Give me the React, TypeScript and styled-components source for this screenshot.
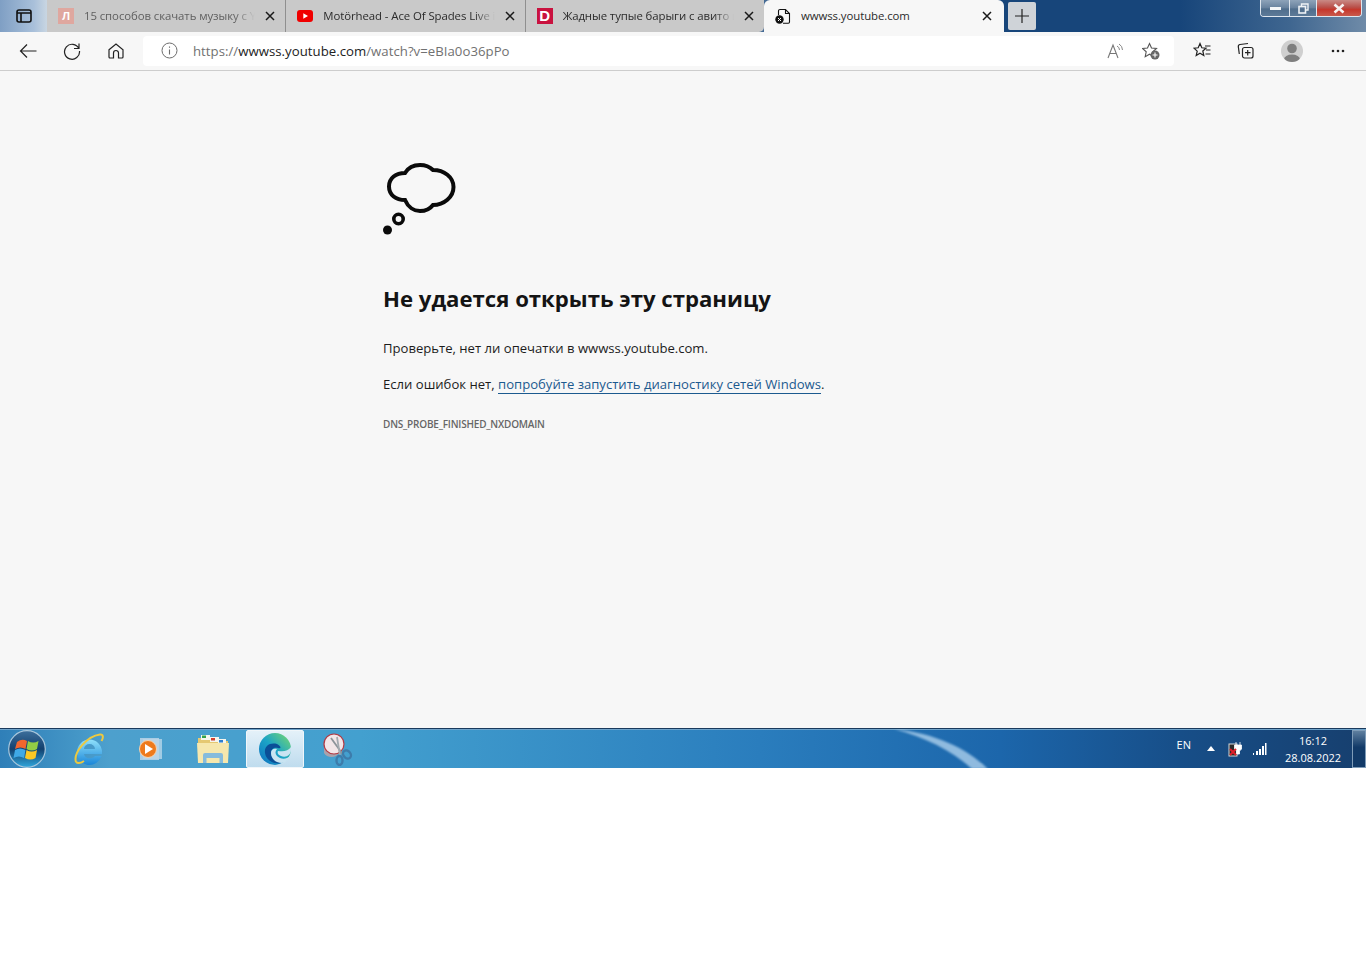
import React from "react";
import styled, { createGlobalStyle } from "styled-components";

const GlobalStyle = createGlobalStyle`
    html, body {
        margin: 0;
        padding: 0;
        background: #ffffff;
    }
    body {
        font-family: "Open Sans", "Noto Sans", sans-serif;
    }
`;

const Page = styled.div`
    width: 1366px;
    height: 971px;
    overflow: hidden;
    background: #ffffff;
`;

const TabStrip = styled.div`
    height: 32px;
    display: flex;
    background: linear-gradient(90deg, #7f9fc4 0, #a9c0da 34px, #c9d6e2 47px, #17457a 1004px, #17457a 1180px, #3f6690 1290px, #6f8ba8 1366px);
`;

const TabToggle = styled.div`
    width: 47px;
    display: flex;
    align-items: center;
    justify-content: center;
    flex: none;
`;

const TabGroup = styled.div`
    display: flex;
    width: 717px;
    background: #c9c9c9;
    border-bottom-right-radius: 5px;
    flex: none;
`;

const Tab = styled.div<{ $divider?: boolean }>`
    flex: 1;
    min-width: 0;
    display: flex;
    align-items: center;
    height: 32px;
    padding-left: 11px;
    box-sizing: border-box;
    border-right: ${props => (props.$divider ? "1px solid #8f8f8f" : "none")};
`;

const ActiveTab = styled.div`
    width: 240px;
    height: 32px;
    flex: none;
    display: flex;
    align-items: center;
    padding: 0 2px 0 11px;
    box-sizing: border-box;
    background: #f7f7f7;
    border-radius: 6px 6px 0 0;
`;

const Favicon = styled.div`
    width: 16px;
    height: 16px;
    flex: none;
    display: flex;
    align-items: center;
    justify-content: center;
    margin-right: 10px;
`;

const LetterIcon = styled.div<{ $bg: string; $size: number }>`
    width: 16px;
    height: 16px;
    background: ${props => props.$bg};
    color: #ffffff;
    font-family: "Liberation Sans", sans-serif;
    font-size: ${props => props.$size}px;
    font-weight: 700;
    line-height: 16px;
    text-align: center;
`;

const TabTitle = styled.div<{ $muted?: boolean; $fade?: boolean }>`
    flex: 1;
    min-width: 0;
    overflow: hidden;
    white-space: nowrap;
    font-size: 11.4px;
    line-height: 16px;
    letter-spacing: -0.08px;
    color: ${props => (props.$muted ? "#5f5f5f" : "#2b2b2b")};
    ${props => props.$fade && "mask-image: linear-gradient(90deg, #000 88%, transparent 100%);"}
`;

const TabClose = styled.button`
    width: 30px;
    height: 28px;
    flex: none;
    border: 0;
    padding: 0;
    background: none;
    display: flex;
    align-items: center;
    justify-content: center;
`;

const NewTab = styled.div`
    width: 28px;
    height: 28px;
    flex: none;
    margin: 2px 0 0 4px;
    border-radius: 2px;
    background: #cfd3d8;
    display: flex;
    align-items: center;
    justify-content: center;
`;

const WindowControls = styled.div`
    margin: 0 4px 0 auto;
    height: 17px;
    flex: none;
    display: flex;
    box-sizing: border-box;
    border: 1px solid #dfe6ee;
    border-top: 0;
    border-radius: 0 0 4px 4px;
    overflow: hidden;
`;

const WindowButton = styled.div<{ $width: number; $close?: boolean }>`
    width: ${props => props.$width}px;
    box-sizing: border-box;
    display: flex;
    align-items: center;
    justify-content: center;
    border-right: ${props => (props.$close ? "none" : "1px solid #dfe6ee")};
    background: ${props =>
        props.$close
            ? "linear-gradient(180deg, #c98a85 0, #b9504a 45%, #c5372c 60%, #c85a4c 100%)"
            : "linear-gradient(180deg, #8ea3b9 0, #67819d 50%, #4f6d8c 55%, #5d7a98 100%)"};
`;

const Toolbar = styled.div`
    height: 39px;
    display: flex;
    align-items: center;
    background: #f7f7f7;
    border-bottom: 1px solid #cdcdcd;
    box-sizing: border-box;
    padding: 0 0 1px 6px;
`;

const ToolSlot = styled.div<{ $width: number }>`
    width: ${props => props.$width}px;
    height: 30px;
    flex: none;
    display: flex;
    align-items: center;
    justify-content: center;
`;

const AddressBar = styled.div`
    width: 1031px;
    height: 30px;
    flex: none;
    margin: 0 6px 0 5px;
    background: #ffffff;
    border-radius: 4px;
    display: flex;
    align-items: center;
    box-sizing: border-box;
    padding: 0 5px 0 18px;
`;

const Url = styled.div`
    margin-left: 15px;
    flex: 1;
    font-size: 13.2px;
    letter-spacing: 0.03px;
    color: #717171;
    white-space: nowrap;
`;

const UrlHost = styled.span`
    color: #222222;
`;

const AddressAction = styled.div`
    width: 36px;
    flex: none;
    display: flex;
    align-items: center;
    justify-content: center;
`;

const Profile = styled.div`
    width: 22px;
    height: 22px;
    border-radius: 50%;
    overflow: hidden;
    background: #cfcfcf;
`;

const ErrorPage = styled.main`
    height: 657px;
    box-sizing: border-box;
    background: #f7f7f7;
    padding: 92px 0 0 383px;
    color: #1c1c1c;
`;

const CloudIcon = styled.svg`
    display: block;
    width: 74px;
    height: 74px;
`;

const Heading = styled.h1`
    margin: 44px 0 0;
    font-size: 22.17px;
    line-height: 34px;
    font-weight: 700;
    color: #141414;
    white-space: nowrap;
`;

const Paragraph = styled.p`
    margin: 0;
    font-size: 13.1px;
    line-height: 20px;
    white-space: nowrap;
`;

const FirstParagraph = styled(Paragraph)`
    margin-top: 23px;
`;

const NextParagraph = styled(Paragraph)`
    margin-top: 16px;
`;

const DiagnosticLink = styled.a`
    color: #1c5a8f;
    text-decoration: none;
    border-bottom: 1px solid #1c5a8f;
`;

const ErrorCode = styled.div`
    margin-top: 23px;
    font-size: 10px;
    letter-spacing: -0.2px;
    line-height: 14px;
    font-weight: 600;
    color: #666666;
`;

const Taskbar = styled.footer`
    position: relative;
    height: 40px;
    display: flex;
    align-items: center;
    box-sizing: border-box;
    border-top: 1px solid #1a3a5c;
    box-shadow: inset 0 1px 0 #6fa4cb;
    background: linear-gradient(90deg, #2f7fb8 0, #4da0cd 110px, #43a0cf 360px, #2a7dbd 760px, #1c66ab 1000px, #174e88 1180px, #173f6e 1366px);
    overflow: hidden;
`;

const TaskbarGlow = styled.svg`
    position: absolute;
    left: 880px;
    top: 0;
    width: 120px;
    height: 40px;
`;

const TaskbarIcon = styled.div<{ $active?: boolean; $width: number; $left?: number }>`
    position: relative;
    width: ${props => props.$width}px;
    margin-left: ${props => props.$left ?? 0}px;
    height: 38px;
    flex: none;
    display: flex;
    align-items: center;
    justify-content: center;
    box-sizing: border-box;
    ${props =>
        props.$active &&
        `
        background: linear-gradient(180deg, #e4f1f9 0, #bfdcee 100%);
        border: 1px solid #f0f6fa;
        border-radius: 2px;
    `}
`;

const Tray = styled.div`
    position: relative;
    margin-left: auto;
    display: flex;
    align-items: center;
    height: 100%;
    color: #ffffff;
`;

const TrayLang = styled.div`
    font-size: 11px;
    margin-right: 16px;
    margin-top: -8px;
`;

const TrayIcon = styled.div<{ $gap: number }>`
    display: flex;
    align-items: center;
    margin-right: ${props => props.$gap}px;
`;

const Clock = styled.div`
    width: 82px;
    font-size: 11px;
    line-height: 17px;
    text-align: center;
    margin-right: -2px;
`;

const ShowDesktop = styled.div`
    width: 14px;
    height: 38px;
    flex: none;
    box-sizing: border-box;
    border: 1px solid #7f9cb8;
    background: linear-gradient(180deg, #5f7f9f 0, #123a68 45%, #123a68 100%);
`;

const CloseGlyph: React.FC = () => (
    <svg width="10" height="10" viewBox="0 0 10 10">
        <path d="M1 1l8 8M9 1l-8 8" stroke="#1a1a1a" strokeWidth="1.5" fill="none" />
    </svg>
);

const tabs = [
    {
        title: "15 способов скачать музыку с YouTube",
        muted: true,
        icon: <LetterIcon $bg="#dfa79f" $size={11}>Л</LetterIcon>,
    },
    {
        title: "Motörhead - Ace Of Spades Live in Moscow",
        muted: false,
        icon: (
            <svg width="16" height="12" viewBox="0 0 16 12">
                <rect width="16" height="12" rx="3" fill="#f00000" />
                <path d="M6.300 3.300v5.400L11 6z" fill="#fff" />
            </svg>
        ),
    },
    {
        title: "Жадные тупые барыги с авито и юлы",
        muted: false,
        icon: <LetterIcon $bg="#c9123f" $size={15}>D</LetterIcon>,
    },
];

const App: React.FC = () => (
    <Page>
        <GlobalStyle />
        <TabStrip>
            <TabToggle>
                <svg width="16" height="14" viewBox="0 0 16 14">
                    <rect x="1" y="1" width="14" height="12" rx="2" fill="none" stroke="#111" strokeWidth="1.600" />
                    <path d="M1 4h14M5 4v9" stroke="#111" strokeWidth="1.600" fill="none" />
                </svg>
            </TabToggle>
            <TabGroup>
                {tabs.map((tab, index) => (
                    <Tab key={tab.title} $divider={index < 2}>
                        <Favicon>{tab.icon}</Favicon>
                        <TabTitle $muted={tab.muted} $fade>{tab.title}</TabTitle>
                        <TabClose><CloseGlyph /></TabClose>
                    </Tab>
                ))}
            </TabGroup>
            <ActiveTab>
                <Favicon>
                    <svg width="16" height="16" viewBox="0 0 16 16">
                        <path d="M5 1.500h5.500L14.500 5.500V14a1.200 1.200 0 0 1-1.200 1.200H8M5 1.500A1.500 1.500 0 0 0 3.500 3v4M10.500 1.500v4h4" fill="none" stroke="#111" strokeWidth="1.100" />
                        <circle cx="4.500" cy="11.500" r="4.200" fill="#111" />
                        <path d="M3 10l3 3M6 10l-3 3" stroke="#fff" strokeWidth="1" />
                    </svg>
                </Favicon>
                <TabTitle>wwwss.youtube.com</TabTitle>
                <TabClose><CloseGlyph /></TabClose>
            </ActiveTab>
            <NewTab>
                <svg width="16" height="16" viewBox="0 0 16 16">
                    <path d="M8 1v14M1 8h14" stroke="#222" strokeWidth="1.200" />
                </svg>
            </NewTab>
            <WindowControls>
                <WindowButton $width={29}>
                    <svg width="11" height="5" viewBox="0 0 11 5"><rect y="1" width="11" height="3" fill="#f4f6f8" /></svg>
                </WindowButton>
                <WindowButton $width={27}>
                    <svg width="11" height="11" viewBox="0 0 11 11">
                        <path d="M3.500 3V1h6.500v6H8" fill="none" stroke="#eef2f5" strokeWidth="1.400" />
                        <rect x="1" y="3.500" width="6.500" height="6.500" fill="none" stroke="#eef2f5" strokeWidth="1.600" />
                    </svg>
                </WindowButton>
                <WindowButton $width={44} $close>
                    <svg width="14" height="11" viewBox="0 0 14 11">
                        <path d="M2.500 1.500l9 8M11.500 1.500l-9 8" stroke="#f6f1f0" strokeWidth="2.600" />
                    </svg>
                </WindowButton>
            </WindowControls>
        </TabStrip>
        <Toolbar>
            <ToolSlot $width={44}>
                <svg width="18" height="16" viewBox="0 0 18 16">
                    <path d="M17.500 8H1.500M8 1.500L1.500 8 8 14.500" fill="none" stroke="#222" strokeWidth="1.200" />
                </svg>
            </ToolSlot>
            <ToolSlot $width={44}>
                <svg width="18" height="18" viewBox="0 0 18 18">
                    <path d="M15.800 6.500A7.500 7.500 0 1 0 16.500 9M16 1.500v5h-5" fill="none" stroke="#222" strokeWidth="1.200" />
                </svg>
            </ToolSlot>
            <ToolSlot $width={44}>
                <svg width="16" height="16" viewBox="0 0 16 16">
                    <path d="M1 6.800L8 1l7 5.800V14a1 1 0 0 1-1 1h-3.500V10a2.500 2.500 0 0 0-5 0v5H2a1 1 0 0 1-1-1z" fill="none" stroke="#222" strokeWidth="1.200" />
                </svg>
            </ToolSlot>
            <AddressBar>
                <svg width="17" height="17" viewBox="0 0 17 17">
                    <circle cx="8.500" cy="8.500" r="7.500" fill="none" stroke="#6d6d6d" strokeWidth="1" />
                    <path d="M8.500 7.500v5M8.500 4.500v1.300" stroke="#6d6d6d" strokeWidth="1.100" />
                </svg>
                <Url>https://<UrlHost>wwwss.youtube.com</UrlHost>/watch?v=eBIa0o36pPo</Url>
                <AddressAction>
                    <svg width="17" height="16" viewBox="0 0 17 16">
                        <path d="M1 15L6 2l5 13M2.800 10.500h6.400" fill="none" stroke="#777" strokeWidth="1.100" />
                        <path d="M10 3a4.500 4.500 0 0 1 2.500 4M12 1a7 7 0 0 1 3.500 6" fill="none" stroke="#888" strokeWidth="1" />
                    </svg>
                </AddressAction>
                <AddressAction>
                    <svg width="18" height="18" viewBox="0 0 18 18">
                        <path d="M7.500 1.500l2 4.500 5 .5-3.700 3.300 1 4.900-4.300-2.500-4.300 2.500 1-4.900L.5 6.500l5-.5z" fill="none" stroke="#555" strokeWidth="1.100" />
                        <circle cx="13" cy="13" r="4.500" fill="#666" />
                        <path d="M13 10.500v5M10.500 13h5" stroke="#fff" strokeWidth="1.100" />
                    </svg>
                </AddressAction>
            </AddressBar>
            <ToolSlot $width={44}>
                <svg width="18" height="17" viewBox="0 0 18 17">
                    <path d="M7 1.500l1.800 4.300 4.200.4-3.200 2.800 1 4.500L7 11.300 3.200 13.600l1-4.500L1 6.200l4.200-.4z" fill="none" stroke="#222" strokeWidth="1.200" />
                    <path d="M12 4h5.500M13 8h4.500M12.500 12h5" stroke="#222" strokeWidth="1.200" />
                </svg>
            </ToolSlot>
            <ToolSlot $width={43}>
                <svg width="17" height="17" viewBox="0 0 17 17">
                    <path d="M11 1.500L3 2.500a2 2 0 0 0-1.700 2.200L2.300 12" fill="none" stroke="#222" strokeWidth="1.200" />
                    <rect x="5.500" y="5.500" width="10.500" height="10.500" rx="2" fill="#f7f7f7" stroke="#222" strokeWidth="1.200" />
                    <path d="M10.700 8v5.500M8 10.700h5.500" stroke="#222" strokeWidth="1.200" />
                </svg>
            </ToolSlot>
            <ToolSlot $width={49}>
                <Profile>
                    <svg width="22" height="22" viewBox="0 0 22 22">
                        <circle cx="11" cy="8.500" r="4.800" fill="#7f7f7f" />
                        <ellipse cx="11" cy="19.500" rx="8" ry="5" fill="#7f7f7f" />
                    </svg>
                </Profile>
            </ToolSlot>
            <ToolSlot $width={44}>
                <svg width="14" height="4" viewBox="0 0 14 4">
                    <circle cx="2" cy="2" r="1.300" fill="#222" />
                    <circle cx="7" cy="2" r="1.300" fill="#222" />
                    <circle cx="12" cy="2" r="1.300" fill="#222" />
                </svg>
            </ToolSlot>
        </Toolbar>
        <ErrorPage>
            <CloudIcon viewBox="0 0 74 74">
                <path d="M22 10C25 5 31 2 37 2C43 2 47 4 50 7C61 7 70.500 14 70.500 24C70.500 34 61 42 50 42C47 46 43 48 37 48C31 48 25 44 22 37C13 37 6 32 6 23.500C6 15 13 10 22 10Z" fill="none" stroke="#0a0a0a" strokeWidth="4" />
                <circle cx="15.500" cy="56" r="4.700" fill="none" stroke="#0a0a0a" strokeWidth="3.600" />
                <circle cx="4.500" cy="67" r="4.500" fill="#0a0a0a" />
            </CloudIcon>
            <Heading>Не удается открыть эту страницу</Heading>
            <FirstParagraph>Проверьте, нет ли опечатки в wwwss.youtube.com.</FirstParagraph>
            <NextParagraph>
                Если ошибок нет, <DiagnosticLink>попробуйте запустить диагностику сетей Windows</DiagnosticLink>.
            </NextParagraph>
            <ErrorCode>DNS_PROBE_FINISHED_NXDOMAIN</ErrorCode>
        </ErrorPage>
        <Taskbar>
            <TaskbarGlow viewBox="0 0 120 40">
                <defs>
                    <filter id="glowBlur"><feGaussianBlur stdDeviation="1.200" /></filter>
                </defs>
                <path d="M14 0C55 4 88 20 108 40L92 40C72 22 45 8 14 0Z" fill="#b5d6f0" opacity="0.75" filter="url(#glowBlur)" />
            </TaskbarGlow>
            <TaskbarIcon $width={54}>
                <svg width="40" height="38" viewBox="0 0 40 38">
                    <defs>
                        <linearGradient id="orbGlass" x1="0" y1="0" x2="0" y2="1">
                            <stop offset="0" stopColor="#3d6f9c" />
                            <stop offset="0.5" stopColor="#12406e" />
                            <stop offset="1" stopColor="#2fa6dc" />
                        </linearGradient>
                    </defs>
                    <circle cx="20" cy="19" r="18.300" fill="url(#orbGlass)" stroke="#a9c7dc" strokeWidth="1.200" />
                    <path d="M10 12q5-4 10-1l-1.500 8q-5-3-10.500 0z" fill="#f0662e" />
                    <path d="M21 11q5 3 10.500 0L30 19q-5 3-10.500 0z" fill="#93cc45" />
                    <path d="M8 20q5-3 10.500 0L17 28q-5-3-10.500 0z" fill="#3fa9e6" />
                    <path d="M19.500 20q5 3 10.500 0l-1.500 8q-5 3-10.500 0z" fill="#fbc824" />
                </svg>
            </TaskbarIcon>
            <TaskbarIcon $width={62} $left={4}>
                <svg width="32" height="34" viewBox="0 0 32 34">
                    <defs>
                        <linearGradient id="ieBody" x1="0" y1="0" x2="0" y2="1">
                            <stop offset="0" stopColor="#8fe0fb" />
                            <stop offset="1" stopColor="#1a86d8" />
                        </linearGradient>
                    </defs>
                    <path fillRule="evenodd" d="M4 20a12.500 12.500 0 0 1 25 0v2H11a6 5 0 0 0 11 2h6.500A12.500 12.500 0 0 1 4 20zM11 17h11a5.500 5 0 0 0-11 0z" fill="url(#ieBody)" />
                    <path d="M3 30C0 21 14 4 27 2.500c3.500-.4 3.500 3 1.500 6.500M3 30c2 2 5 1 8-1" fill="none" stroke="#edc93f" strokeWidth="2" />
                </svg>
            </TaskbarIcon>
            <TaskbarIcon $width={59}>
                <svg width="26" height="24" viewBox="0 0 26 24">
                    <rect x="6" y="2" width="19" height="20" fill="#dbe9f3" opacity="0.6" />
                    <rect x="3" y="1" width="19" height="22" fill="#bcd5e7" opacity="0.85" />
                    <circle cx="11" cy="12" r="8.500" fill="#ee7a1c" stroke="#f7d3ae" strokeWidth="1" />
                    <path d="M8 7l8 5-8 5z" fill="#fff" />
                </svg>
            </TaskbarIcon>
            <TaskbarIcon $width={67}>
                <svg width="34" height="30" viewBox="0 0 34 30">
                    <path d="M2 4h11l2 3h17v21H2z" fill="#e5c872" />
                    <rect x="5" y="1" width="9" height="5" fill="#f6f6ee" />
                    <rect x="6" y="1.500" width="4" height="2.500" fill="#35a24a" />
                    <rect x="14" y="3" width="9" height="5" fill="#f6f6ee" />
                    <rect x="15" y="4" width="4" height="2.500" fill="#d2402e" />
                    <rect x="22" y="5" width="8" height="5" fill="#f6f6ee" />
                    <rect x="23" y="6" width="4" height="2.500" fill="#2f7fd0" />
                    <path d="M1 9h32l-1 20H2z" fill="#f6e7ad" />
                    <path d="M7 29v-8a2 2 0 0 1 2-2h16a2 2 0 0 1 2 2v8h-3.500v-5h-13v5z" fill="#86bbdc" />
                </svg>
            </TaskbarIcon>
            <TaskbarIcon $active $width={58}>
                <svg width="34" height="34" viewBox="0 0 34 34">
                    <defs>
                        <linearGradient id="edgeRing" x1="0" y1="1" x2="1" y2="0">
                            <stop offset="0" stopColor="#0d6ec0" />
                            <stop offset="0.5" stopColor="#1ca5c6" />
                            <stop offset="1" stopColor="#7ada6c" />
                        </linearGradient>
                    </defs>
                    <circle cx="17" cy="17" r="16" fill="url(#edgeRing)" />
                    <path d="M33 18C33 23 28 26 23 24C20 23 19 21 20 19C26 20 30 19 33 15ZM33 18C33 26 27 33 19 33L28 29C31 26 33 22 33 18Z" fill="#c9e4f2" />
                    <path d="M19 12C11 10 6 15 7 21C8 28 16 33 24 31C18 30 13 26 13 21C13 17 16 15 20 16C23 17 24 15 19 12Z" fill="#0a4f97" />
                    <path d="M13 21C13 27 18 31 24 31C28 30 31 27 32 24C28 28 22 27 19 24C17 22 17 19 19 17C15 16 13 18 13 21Z" fill="#c9e4f2" />
                </svg>
            </TaskbarIcon>
            <TaskbarIcon $width={66}>
                <svg width="32" height="34" viewBox="0 0 32 34">
                    <path d="M3 14v7c2 4 8 5 12 3l6-5v-5z" fill="#a9a2ac" />
                    <circle cx="13" cy="12" r="10" fill="#f3e6e8" stroke="#b23a44" strokeWidth="1.200" />
                    <path d="M10 6L23 24" stroke="#8d9399" strokeWidth="1.800" />
                    <path d="M16 5L19 24" stroke="#a4aab0" strokeWidth="1.800" />
                    <ellipse cx="18.500" cy="28.500" rx="3" ry="4.500" fill="none" stroke="#3d7cab" strokeWidth="2.400" />
                    <ellipse cx="26" cy="22.500" rx="3.500" ry="4.500" transform="rotate(-40 26 22.500)" fill="none" stroke="#3d7cab" strokeWidth="2.400" />
                </svg>
            </TaskbarIcon>
            <Tray>
                <TrayLang>EN</TrayLang>
                <TrayIcon $gap={13}>
                    <svg width="8" height="5" viewBox="0 0 8 5"><path d="M0 5L4 0l4 5z" fill="#ffffff" /></svg>
                </TrayIcon>
                <TrayIcon $gap={8}>
                    <svg width="16" height="17" viewBox="0 0 16 17">
                        <rect x="1" y="4" width="8" height="12" fill="#2b2b2b" stroke="#d8d8d8" strokeWidth="1" />
                        <path d="M8 2v3M12 2v3M6.500 5h7v4l-2 2v3h-3v-3l-2-2z" fill="#ffffff" stroke="#ffffff" strokeWidth="0.800" />
                        <path d="M2 9l6 6M8 9l-6 6" stroke="#e0202a" strokeWidth="2" />
                    </svg>
                </TrayIcon>
                <TrayIcon $gap={5}>
                    <svg width="15" height="12" viewBox="0 0 15 12">
                        <path d="M1 10h1v2H1zM4 8h2v4H4zM7 6h2v6H7zM10 3h2v9h-2zM13 0h1.500v12H13z" fill="#ffffff" />
                    </svg>
                </TrayIcon>
                <Clock>16:12<br />28.08.2022</Clock>
                <ShowDesktop />
            </Tray>
        </Taskbar>
    </Page>
);

export default App;
